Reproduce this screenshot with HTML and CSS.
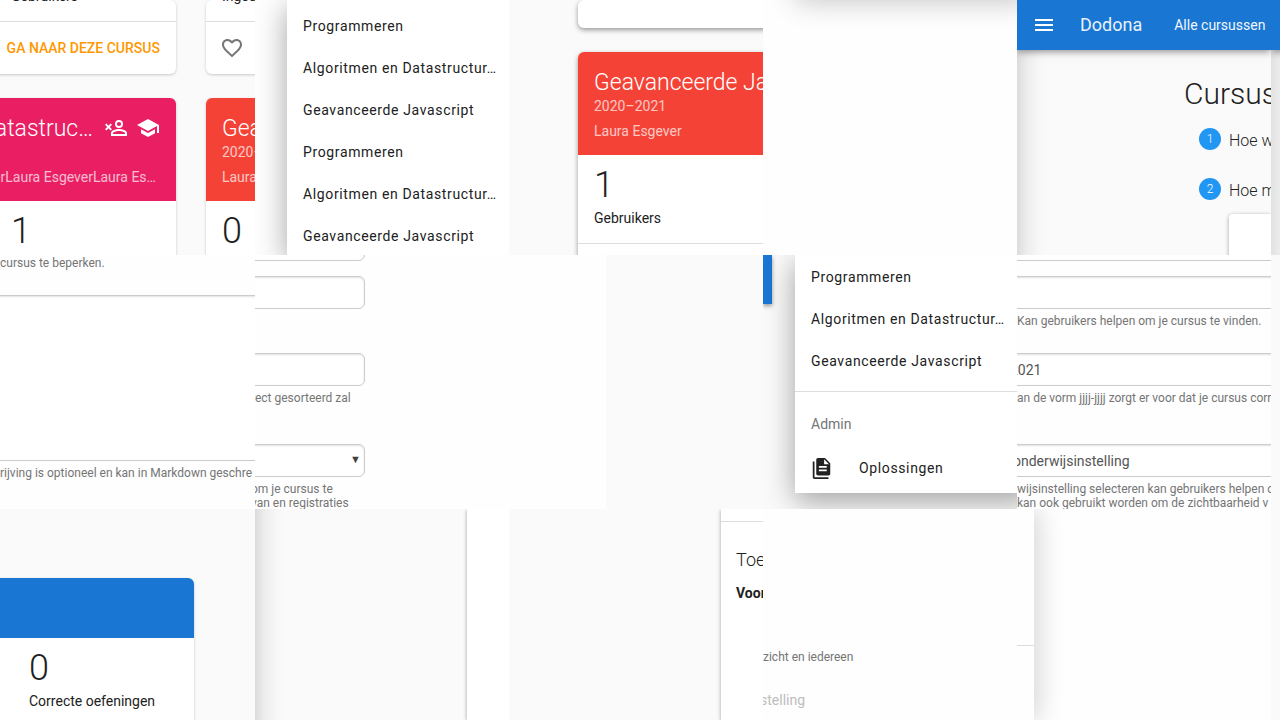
FILE: index.html
```html
<!DOCTYPE html>
<html lang="nl">
<head>
<meta charset="utf-8">
<title>Dodona</title>
<link rel="stylesheet" href="styles.css">
</head>
<body>
<main class="mosaic">
  <section class="tile grounds courses">
    <div class="column column-left">
      <article class="card">
        <div class="stats stats-cut"><span class="label">Gebruikers</span></div>
        <div class="actions actions-end"><a class="action" href="#cursus">GA NAAR DEZE CURSUS</a></div>
      </article>
      <article class="card">
        <header class="card-head pink head-end">
          <div class="title-row">
            <h2 class="card-title">atastruc…</h2>
            <svg class="icon" viewBox="0 0 24 24"><path d="M15 4a4 4 0 1 0 0 8 4 4 0 0 0 0-8m0 1.900a2.100 2.100 0 1 1 0 4.200 2.100 2.100 0 0 1 0-4.200M15 13c-2.670 0-8 1.330-8 4v3h16v-3c0-2.670-5.330-4-8-4m0 1.900c2.970 0 6.100 1.460 6.100 2.100v1.100H8.900V17c0-.640 3.100-2.100 6.100-2.100"/><path d="M1.700 8.200l5.600 5.600M7.300 8.200l-5.600 5.600" stroke="currentColor" stroke-width="1.900"/></svg>
            <svg class="icon" viewBox="0 0 24 24"><path d="M12 3L1 9l11 6 9-4.910V17h2V9M5 13.180v4L12 21l7-3.820v-4L12 17l-7-3.820z"/></svg>
          </div>
          <p class="year"></p>
          <p class="teacher teacher-end">erLaura EsgeverLaura Es…</p>
        </header>
        <div class="stats"><span class="number">1</span></div>
      </article>
    </div>
    <div class="column column-right">
      <article class="card">
        <div class="stats stats-cut"><span class="label">Inged</span></div>
        <div class="actions"><button class="icon-button" type="button" aria-label="Favoriet"><svg class="icon" viewBox="0 0 24 24"><path d="M12.100 18.550l-.1.100-.110-.100C7.140 14.240 4 11.390 4 8.500 4 6.500 5.500 5 7.500 5c1.540 0 3.040 1 3.570 2.360h1.860C13.460 6 14.960 5 16.500 5c2 0 3.500 1.500 3.500 3.500 0 2.890-3.140 5.740-7.900 10.050M16.500 3c-1.740 0-3.410.810-4.500 2.080C10.910 3.810 9.240 3 7.500 3 4.420 3 2 5.410 2 8.500c0 3.770 3.400 6.860 8.550 11.530L12 21.350l1.450-1.320C18.600 15.360 22 12.270 22 8.500 22 5.410 19.580 3 16.500 3z"/></svg></button></div>
      </article>
      <article class="card">
        <header class="card-head red">
          <div class="title-row"><h2 class="card-title">Gea</h2></div>
          <p class="year">2020–</p>
          <p class="teacher">Laura</p>
        </header>
        <div class="stats"><span class="number">0</span></div>
      </article>
    </div>
  </section>

  <section class="tile pad-drawer">
    <nav class="drawer drawer-start">
      <a class="item" href="#p1">Programmeren</a>
      <a class="item" href="#a1">Algoritmen en Datastructur…</a>
      <a class="item" href="#g1">Geavanceerde Javascript</a>
      <a class="item" href="#p2">Programmeren</a>
      <a class="item" href="#a2">Algoritmen en Datastructur…</a>
      <a class="item" href="#g2">Geavanceerde Javascript</a>
    </nav>
  </section>

  <section class="tile grounds course-single">
    <article class="card raised"><div class="blank"></div></article>
    <article class="card raised">
      <header class="card-head red">
        <div class="title-row"><h2 class="card-title">Geavanceerde Ja</h2></div>
        <p class="year">2020–2021</p>
        <p class="teacher">Laura Esgever</p>
      </header>
      <div class="stats"><span class="number">1</span><span class="label">Gebruikers</span></div>
      <div class="actions"></div>
    </article>
  </section>

  <section class="tile pad-drawer"><div class="drawer-foot"></div></section>

  <section class="tile grounds page-top">
    <header class="toolbar">
      <button class="menu" type="button" aria-label="Menu"><svg class="icon" viewBox="0 0 24 24"><path d="M3 6h18v2H3zM3 11h18v2H3zM3 16h18v2H3z"/></svg></button>
      <a class="brand" href="#home">Dodona</a>
      <a class="toolbar-link" href="#cursussen">Alle cursussen</a>
    </header>
    <div class="page edge-shade">
      <h1 class="page-title">Cursus</h1>
      <div class="step"><span class="step-dot">1</span><span class="step-name">Hoe w</span></div>
      <div class="step"><span class="step-dot">2</span><span class="step-name">Hoe m</span></div>
      <div class="panel step-panel"></div>
    </div>
  </section>

  <section class="tile grounds page-top">
    <div class="toolbar"></div>
    <div class="page sliver-shade"></div>
  </section>

  <section class="tile form bleed">
    <p class="hint first-hint">cursus te beperken.</p>
    <textarea class="control area" aria-label="Beschrijving"></textarea>
    <p class="hint">rijving is optioneel en kan in Markdown geschre</p>
  </section>

  <section class="tile form form-end">
    <input class="control lead" type="text" aria-label="Naam">
    <input class="control second" type="text" aria-label="Lesgever">
    <p class="hint"></p>
    <input class="control" type="text" aria-label="Academiejaar">
    <p class="hint two">rect gesorteerd zal</p>
    <div class="select-wrap">
      <select class="control" aria-label="Onderwijsinstelling"><option></option></select>
      <span class="arrow">▼</span>
    </div>
    <p class="hint">om je cursus te<br>van en registraties</p>
  </section>

  <section class="tile grounds"><div class="form-rest"></div></section>

  <section class="tile grounds pad-drawer">
    <div class="toolbar-end"></div>
    <nav class="drawer drawer-end">
      <a class="item" href="#p3">Programmeren</a>
      <a class="item" href="#a3">Algoritmen en Datastructur…</a>
      <a class="item" href="#g3">Geavanceerde Javascript</a>
      <h2 class="group">Admin</h2>
      <a class="item item-icon" href="#oplossingen"><svg class="item-svg" viewBox="0 0 24 24"><path d="M16 0H8C6.900 0 6 .9 6 2v16c0 1.100.9 2 2 2h12c1.100 0 2-.9 2-2V6l-6-6m2 15H9v-2h9v2m0-4H9V9h9v2m-3-4V1.500L20.500 7H15M4 4v18h16v2H4c-1.100 0-2-.9-2-2V4h2z"/></svg>Oplossingen</a>
    </nav>
  </section>

  <section class="tile form bleed">
    <input class="control lead" type="text" aria-label="Naam">
    <input class="control second" type="text" aria-label="Lesgever">
    <p class="hint">Kan gebruikers helpen om je cursus te vinden.</p>
    <input class="control" type="text" value="2021" aria-label="Academiejaar">
    <p class="hint two">an de vorm jjjj-jjjj zorgt er voor dat je cursus corr</p>
    <select class="control school" aria-label="Onderwijsinstelling"><option>onderwijsinstelling</option></select>
    <p class="hint">wijsinstelling selecteren kan gebruikers helpen o<br>kan ook gebruikt worden om de zichtbaarheid v</p>
  </section>

  <section class="tile grounds"></section>

  <section class="tile grounds stats-tile">
    <article class="card">
      <div class="blue-head"></div>
      <div class="stats stats-wide"><span class="number">0</span><span class="label">Correcte oefeningen</span></div>
    </article>
  </section>

  <section class="tile grounds edge-shade panel-tile"><div class="panel"></div></section>

  <section class="tile grounds panel-tile">
    <div class="panel settings">
      <h2 class="settings-title">Toe</h2>
      <p class="settings-label">Voor</p>
    </div>
  </section>

  <section class="tile form choices">
    <p class="hint">zicht en iedereen</p>
    <p class="disabled">stelling</p>
  </section>

  <section class="tile"><div class="drawer-edge"><hr class="rule"></div></section>

  <section class="tile grounds"></section>
</main>
</body>
</html>
```
FILE: styles.css
```css
* { box-sizing: border-box; }

body, h1, h2, p { margin: 0; }

body {
  font-family: Roboto, "Noto Sans", sans-serif;
  font-size: 14px;
  line-height: 20px;
  color: #212121;
  background: #fefefe;
}

a { color: inherit; text-decoration: none; }
button { border: 0; padding: 0; background: none; color: inherit; }

.mosaic {
  display: grid;
  grid-template-columns: 255fr 254fr 254fr 254fr 254fr 9fr;
  grid-template-rows: 255fr 254fr 211fr;
  height: 100vh;
}

.tile {
  min-width: 0;
  min-height: 0;
  overflow: hidden;
  background: #fefefe;
  white-space: nowrap;
}

.grounds { background-color: #fafafa; }

.icon { display: block; flex: none; width: 24px; height: 24px; fill: currentColor; }

/* Course cards */
.courses { display: flex; gap: 30px; }
.column { display: flex; flex-direction: column; gap: 24px; }
.column-left { flex: 0 0 calc(69% + 16px); min-width: 0; margin-left: -16px; }
.column-right { flex: 1; min-width: 0; margin-right: -16px; }

.card {
  background: #fff;
  border-radius: 6px;
  box-shadow: 0 1px 3px rgba(0, 0, 0, .2);
}
.raised { box-shadow: 0 2px 5px rgba(0, 0, 0, .4); }

.card-head { padding: 16px 16px 14px; border-radius: 6px 6px 0 0; color: #fff; overflow: hidden; }
.pink { background: #e91e63; }
.red { background: #f44336; }
.title-row { display: flex; align-items: center; gap: 8px; height: 28px; }
.head-end .title-row { justify-content: flex-end; }
.head-end .card-title { margin-right: 3px; }
.card-title { font-size: 23px; font-weight: 300; line-height: 28px; padding-top: 2px; }
.year { height: 20px; margin-bottom: 5px; opacity: .7; }
.teacher { opacity: .7; }
.teacher-end { display: flex; justify-content: flex-end; padding-right: 4px; }

.stats { display: flex; flex-direction: column; gap: 3px; padding: 10px 16px 15px; }
.column-left .stats { padding-left: 27px; }
.stats.stats-cut { height: 21px; padding-top: 0; justify-content: flex-end; }
.number { font-size: 36px; font-weight: 300; line-height: 40px; }
.label { flex: none; }
.actions { display: flex; align-items: center; height: 53px; padding: 0 14px; border-top: 1px solid #ddd; color: #757575; }
.actions-end { justify-content: flex-end; padding: 0 16px; }
.action { color: #ff9800; font-weight: 500; }

.course-single { display: flex; flex-direction: column; gap: 24px; padding-left: 69px; }
.course-single .card { margin-right: -16px; }
.blank { height: 28px; }

/* Navigation drawer */
.pad-drawer { display: flex; align-items: flex-start; }
.drawer {
  flex: 1;
  min-width: 0;
  background: #fff;
  margin-left: 32px;
  margin-right: -16px;
  box-shadow: 0 8px 28px rgba(0, 0, 0, .36);
}
.drawer-start { align-self: stretch; padding-top: 5px; }
.item { display: flex; align-items: center; height: 42px; padding: 0 16px; letter-spacing: .045em; }
.toolbar-end { width: 9px; height: 49px; background: #1976d2; box-shadow: 0 2px 4px rgba(0, 0, 0, .4); }
.drawer-end { margin-left: 23px; padding-top: 1px; }
.group { margin-top: 9px; padding: 22px 16px; border-top: 1px solid #ddd; font-size: 14px; font-weight: 400; color: #757575; }
.item-icon { gap: 27px; height: 50px; margin-top: -13px; }
.item-svg { width: 21px; height: 21px; fill: currentColor; }
.drawer-foot { flex: 1; height: 40px; margin: -40px -16px 0 32px; box-shadow: 0 2px 28px rgba(0, 0, 0, .22); }

/* Page header and steps */
.page-top { display: flex; flex-direction: column; }
.toolbar {
  position: relative;
  display: flex;
  flex: none;
  align-items: center;
  height: 50px;
  padding-left: 15px;
  background: #1976d2;
  color: #fff;
  box-shadow: 0 1px 8px rgba(0, 0, 0, .5);
}
.brand { margin-left: 24px; font-size: 18px; opacity: .9; }
.toolbar-link { margin-left: 32px; opacity: .95; }
.edge-shade {
  background-image: linear-gradient(90deg, rgba(0, 0, 0, .12), rgba(0, 0, 0, .05) 10px, rgba(0, 0, 0, .01) 22px, transparent 30px);
}
.page { flex: 1; min-height: 0; padding: 24px 0 0 167px; }
.sliver-shade { padding: 0; background: linear-gradient(90deg, #e2e2e2, #ececec); }
.page-title { font-size: 30px; font-weight: 300; line-height: 40px; }
.step { display: flex; align-items: center; gap: 8px; height: 50px; padding-left: 15px; }
.step-dot {
  flex: none;
  width: 22px;
  height: 22px;
  border-radius: 50%;
  background: #2196f3;
  color: #fff;
  font-size: 12px;
  font-weight: 300;
  line-height: 22px;
  text-align: center;
}
.step-name { padding-top: 4px; font-size: 16px; font-weight: 300; }
.panel { background: #fff; border-radius: 4px 0 0; box-shadow: 0 1px 4px rgba(0, 0, 0, .35); }
.step-panel { height: 60px; margin-left: 45px; }

/* Form */
.form { display: flex; flex-direction: column; align-items: stretch; }
.control {
  display: block;
  flex: none;
  width: 100%;
  height: 33px;
  padding: 0 8px;
  border: 1px solid #ccc;
  border-radius: 6px;
  background: #fff;
  box-shadow: inset 0 1px 2px rgba(0, 0, 0, .12);
  font: 14px/20px Roboto, "Noto Sans", sans-serif;
  color: #555;
  appearance: none;
  resize: none;
}
.lead { margin-top: -27px; }
.second { margin-top: 15px; }
.bleed .control { width: calc(100% + 32px); margin-left: -16px; }
.form-end { padding-right: 144px; }
.form-end .control { margin-left: -16px; width: calc(100% + 16px); }
.form-end .hint { margin-left: -4px; }
.select-wrap { position: relative; }
.arrow { position: absolute; right: 4px; top: 6px; font-size: 11px; color: #424242; }
.area.control { height: 166px; }
.school.control { padding-left: 11px; }
.hint { flex: none; min-height: 14px; margin: 5px 0 25px; font-size: 12px; line-height: 14px; color: #757575; }
.first-hint { margin-top: 1px; }
.two { min-height: 28px; }
.form-rest { width: 38%; height: 100%; background: #fefefe; }

/* Bottom row */
.stats-tile { padding: 69px 61px 0 0; }
.stats-tile .card { margin-left: -16px; height: calc(100% + 16px); }
.blue-head { height: 60px; background: #1976d2; border-radius: 0 6px 0 0; }
.stats-wide { padding-left: 45px; }
.panel-tile { padding-left: 212px; }
.panel-tile .panel { height: 100%; border-radius: 0; }
.settings { padding-left: 15px; }
.settings::before { content: ""; display: block; height: 12px; margin-left: -15px; border-bottom: 1px solid #ddd; }
.settings-title { margin-top: 26px; font-size: 18px; font-weight: 300; line-height: 24px; }
.settings-label { margin-top: 11px; font-weight: 700; }
.choices { padding-top: 136px; }
.disabled { margin-top: 1px; margin-left: -3px; color: #bdbdbd; }
.drawer-edge { width: 17px; height: 100%; padding-top: 136px; background: #fefefe; box-shadow: 0 0 28px rgba(0, 0, 0, .26); }
.rule { margin: 0; border: 0; border-top: 1px solid #ddd; }
```
